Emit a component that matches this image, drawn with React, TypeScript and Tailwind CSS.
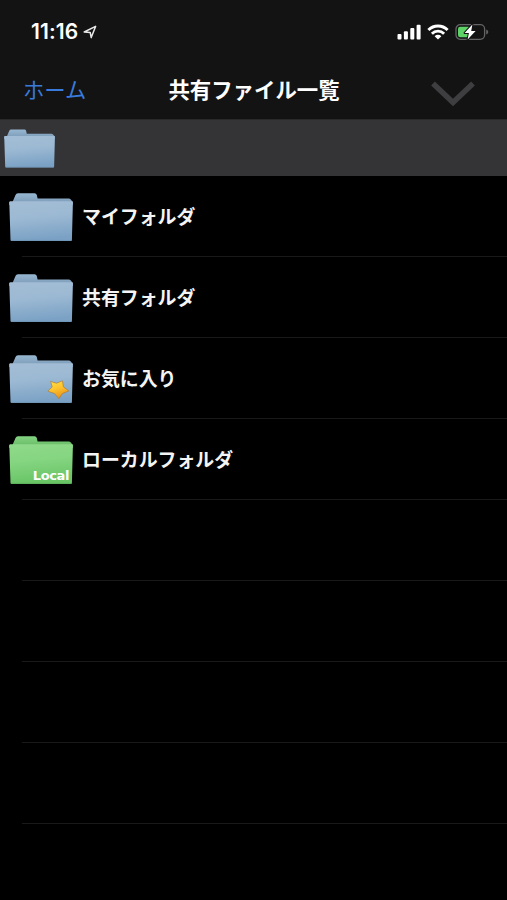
import React from 'react'

type FolderVariant = 'blue' | 'favorite' | 'local'

interface FolderRow {
  label: string
  variant: FolderVariant
}

const rows: FolderRow[] = [
  { label: 'マイフォルダ', variant: 'blue' },
  { label: '共有フォルダ', variant: 'blue' },
  { label: 'お気に入り', variant: 'favorite' },
  { label: 'ローカルフォルダ', variant: 'local' },
]

const EMPTY_ROWS = 4

function FolderIcon({ variant, className, id }: { variant: FolderVariant; className: string; id: string }) {
  const green = variant === 'local'
  return (
    <svg viewBox="0 0 64 48" className={className} aria-hidden="true">
      <defs>
        <linearGradient id={`${id}-front`} x1="0" y1="0" x2="0.15" y2="1">
          <stop offset="0" stopColor={green ? '#8fda8b' : '#a3bdd5'} />
          <stop offset="0.45" stopColor={green ? '#85d581' : '#9cb9d3'} />
          <stop offset="1" stopColor={green ? '#69c566' : '#7ba2c5'} />
        </linearGradient>
        <linearGradient id={`${id}-back`} x1="0" y1="0" x2="0" y2="1">
          <stop offset="0" stopColor={green ? '#85d582' : '#98b7d1'} />
          <stop offset="1" stopColor={green ? '#62b660' : '#7696b3'} />
        </linearGradient>
        <linearGradient id={`${id}-star`} x1="0" y1="0" x2="0.4" y2="1">
          <stop offset="0" stopColor="#ffe04a" />
          <stop offset="0.5" stopColor="#fdc52e" />
          <stop offset="1" stopColor="#ec941b" />
        </linearGradient>
      </defs>
      <path
        d="M3.5 9 L6.5 2 Q7.2 0.2 9 0.2 H25.6 Q27.3 0.2 27.8 2 L28.6 5.4 H59.6 Q61 5.4 61.8 6.6 L63.8 9 V12 H0.2 V9 Z"
        fill={`url(#${id}-back)`}
      />
      <path
        d="M0.3 9.2 Q0.3 8.3 1.3 8.3 H62.8 Q64 8.3 63.9 9.4 L62.9 46.9 Q62.8 47.9 61.9 47.9 H2.6 Q1.6 47.9 1.5 46.9 Z"
        fill={`url(#${id}-front)`}
      />
      <path d="M2 47.4 H62.5" stroke={green ? '#58a858' : '#6b90b0'} strokeWidth="0.7" />
      {variant === 'favorite' && (
        <path
          d="M41.6 26.4 L47.6 28.2 L53.4 25.8 L54.4 31.8 L59.8 35.9 L53.6 38.4 L49.8 43.6 L45.6 38.6 L39 36.2 L43.2 31.8 Z"
          fill={`url(#${id}-star)`}
          stroke="#a8752f"
          strokeWidth="0.6"
          strokeLinejoin="round"
        />
      )}
    </svg>
  )
}

function StatusBar() {
  return (
    <div className="flex h-[64px] items-center pl-[31px] pr-[18px] text-white">
      <span className="w-[48px] text-[21px] font-semibold leading-6 whitespace-nowrap tracking-[0.1px] font-['Inter','Liberation_Sans',sans-serif]">
        11:16
      </span>
      <svg viewBox="0 0 14 14" className="ml-[4px] h-[14px] w-[14px]" fill="none" aria-hidden="true">
        <path d="M1.2 7 L12.6 1.4 L8.2 12.6 L7.2 7.4 Z" stroke="#e8e8e8" strokeWidth="1.5" strokeLinejoin="round" />
      </svg>
      <div className="ml-auto flex items-center">
        <svg viewBox="0 0 24 16" className="h-4 w-6" fill="#ffffff" aria-hidden="true">
          <rect x="0.5" y="10" width="4" height="5.5" rx="1" />
          <rect x="6.9" y="7.3" width="4" height="8.2" rx="1" />
          <rect x="13.3" y="4" width="4" height="11.5" rx="1" />
          <rect x="19.6" y="0.7" width="4" height="14.8" rx="1" />
        </svg>
        <svg viewBox="0 0 22 16" className="ml-[6px] h-4 w-[22px]" fill="none" stroke="#ffffff" strokeWidth="2.9" aria-hidden="true">
          <path d="M1.4 6 A13.4 13.4 0 0 1 20.6 6" />
          <path d="M4.9 9.7 A8.6 8.6 0 0 1 17.1 9.7" />
          <path d="M11 15.5 L7.6 12.2 A4.9 4.9 0 0 1 14.4 12.2 Z" fill="#ffffff" stroke="none" />
        </svg>
        <svg viewBox="0 0 34 18" className="ml-[6px] h-[18px] w-[34px]" aria-hidden="true">
          <rect x="1" y="1.7" width="28.6" height="14.6" rx="4.2" fill="none" stroke="#646466" strokeWidth="1.3" />
          <path d="M31.2 6.6 Q33.3 7.3 33.3 9 Q33.3 10.7 31.2 11.4 Z" fill="#646466" />
          <rect x="3" y="3.7" width="12.5" height="10.6" rx="2.2" fill="#5fd267" />
          <path
            d="M17.4 1.4 L9.6 9.9 H13.9 L12.6 16.6 L20.6 8 H16.2 Z"
            fill="#ffffff"
            stroke="#131313"
            strokeWidth="2"
            paintOrder="stroke"
            strokeLinejoin="round"
          />
        </svg>
      </div>
    </div>
  )
}

function NavBar() {
  return (
    <div className="grid h-[55px] grid-cols-[1fr_auto_1fr] items-start pt-[9px] pr-[22px] pl-[23px]">
      <span className="text-[21.3px] leading-[32px] text-[#397bdc]">ホーム</span>
      <h1 className="text-[21.4px] font-bold leading-[32px] text-white">共有ファイル一覧</h1>
      <svg viewBox="0 0 44 26" className="mt-[8px] mr-[10px] h-[26px] w-[44px] justify-self-end" fill="none" aria-hidden="true">
        <path d="M2 2.5 L22 21.5 L42 2.5" stroke="#3e3e40" strokeWidth="5.4" />
      </svg>
    </div>
  )
}

export default function App() {
  return (
    <div className="h-[900px] w-[507px] overflow-hidden bg-black font-['Noto_Sans_CJK_JP',sans-serif]">
      <header className="bg-[#131313]">
        <StatusBar />
        <NavBar />
      </header>

      <div className="flex h-[57px] items-center border-t border-[#2a2a2b] bg-[#343436] pl-[4px]">
        <FolderIcon variant="blue" id="current" className="h-[39px] w-[51px]" />
      </div>

      <ul>
        {rows.map((row, i) => (
          <li key={row.label} className="flex h-[81px] flex-col">
            <div className="flex flex-1 items-center pl-[9px]">
              <div className="relative mt-[2px] h-12 w-16">
                <FolderIcon variant={row.variant} id={`row-${i}`} className="h-12 w-16" />
                {row.variant === 'local' && (
                  <span className="absolute right-[4px] bottom-px text-[13px] leading-[14px] font-bold text-white font-['DejaVu_Sans','Noto_Sans',sans-serif] tracking-[-0.4px]">
                    Local
                  </span>
                )}
              </div>
              <span className="ml-[9px] text-[18.9px] font-bold leading-7 text-[#f4f4f4]">{row.label}</span>
            </div>
            <div className="ml-[22px] h-px bg-[#191919]" />
          </li>
        ))}
        {Array.from({ length: EMPTY_ROWS }, (_, i) => (
          <li key={i} className="flex h-[81px] flex-col justify-end">
            <div className="ml-[22px] h-px bg-[#191919]" />
          </li>
        ))}
      </ul>
    </div>
  )
}
